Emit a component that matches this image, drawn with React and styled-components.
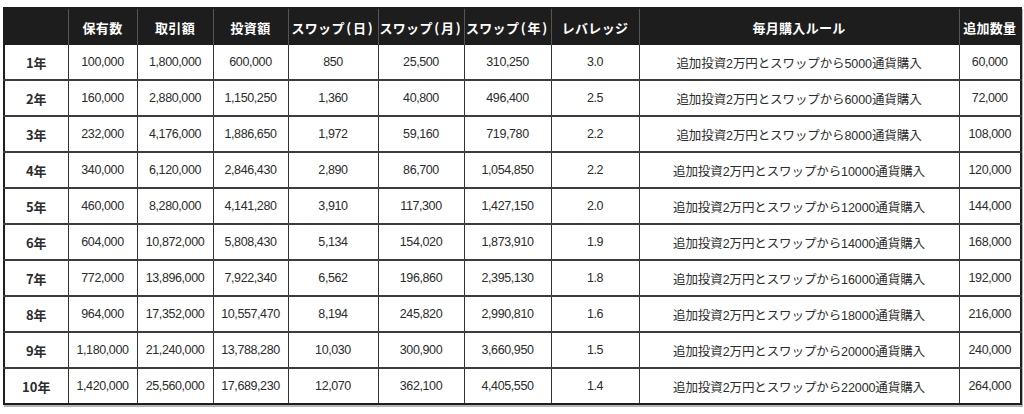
import React from 'react';
import styled, { createGlobalStyle } from 'styled-components';

const GlobalStyle = createGlobalStyle`
  body {
    margin: 0;
    background: #fff;
  }
`;

const Page = styled.div`
  width: 1024px;
  height: 414px;
  padding: 7px 0 0 3px;
  box-sizing: border-box;
  background: #fff;
`;

const Table = styled.table`
  width: 1017px;
  table-layout: fixed;
  border-collapse: collapse;
  border: 2px solid #1e1e1e;
  box-shadow: 1px 2px 0 #b5b5b5;
  font-family: "Liberation Sans", "Noto Sans CJK JP", sans-serif;
`;

const HeadCell = styled.th`
  height: 36px;
  padding: 0;
  background: #1d1d1d;
  color: #fff;
  font-family: "Noto Sans CJK JP", sans-serif;
  font-size: 13px;
  font-weight: 700;
  letter-spacing: 0.3px;
  text-align: center;
  white-space: nowrap;
  border-left: 1px solid #555;
  &:first-child {
    border-left: none;
  }
`;

const Paren = styled.span`
  margin: 0 1.5px;
`;

const Row = styled.tr`
  border-top: 2px solid #3c3c3c;
  &:first-child {
    border-top: none;
  }
`;

const Cell = styled.td`
  height: 34px;
  padding: 0;
  text-align: center;
  white-space: nowrap;
  color: #2c2c2c;
  font-size: ${p => (p.$label ? '13px' : '12.5px')};
  font-weight: ${p => (p.$label ? 700 : 400)};
  letter-spacing: ${p => (p.$label ? '0' : '-0.4px')};
  font-family: ${p => (p.$label ? '"Noto Sans CJK JP", sans-serif' : 'inherit')};
  border-left: 1px solid #333;
  &:first-child {
    border-left: none;
  }
`;

const RuleCell = styled(Cell)`
  letter-spacing: -0.1px;
  font-size: 12.5px;
`;

const columns = [
  ['', 64],
  ['保有数', 69],
  ['取引額', 76],
  ['投資額', 75],
  ['スワップ', 90, '日'],
  ['スワップ', 86, '月'],
  ['スワップ', 87, '年'],
  ['レバレッジ', 88],
  ['毎月購入ルール', 320],
  ['追加数量', 62],
];

const rows = [
  ['1年', '100,000', '1,800,000', '600,000', '850', '25,500', '310,250', '3.0', '5000', '60,000'],
  ['2年', '160,000', '2,880,000', '1,150,250', '1,360', '40,800', '496,400', '2.5', '6000', '72,000'],
  ['3年', '232,000', '4,176,000', '1,886,650', '1,972', '59,160', '719,780', '2.2', '8000', '108,000'],
  ['4年', '340,000', '6,120,000', '2,846,430', '2,890', '86,700', '1,054,850', '2.2', '10000', '120,000'],
  ['5年', '460,000', '8,280,000', '4,141,280', '3,910', '117,300', '1,427,150', '2.0', '12000', '144,000'],
  ['6年', '604,000', '10,872,000', '5,808,430', '5,134', '154,020', '1,873,910', '1.9', '14000', '168,000'],
  ['7年', '772,000', '13,896,000', '7,922,340', '6,562', '196,860', '2,395,130', '1.8', '16000', '192,000'],
  ['8年', '964,000', '17,352,000', '10,557,470', '8,194', '245,820', '2,990,810', '1.6', '18000', '216,000'],
  ['9年', '1,180,000', '21,240,000', '13,788,280', '10,030', '300,900', '3,660,950', '1.5', '20000', '240,000'],
  ['10年', '1,420,000', '25,560,000', '17,689,230', '12,070', '362,100', '4,405,550', '1.4', '22000', '264,000'],
];

const App = () => {
  return (
    <Page>
      <GlobalStyle />
      <Table>
        <colgroup>
          {columns.map(([name, w], i) => (
            <col key={i} style={{ width: w }} />
          ))}
        </colgroup>
        <thead>
          <tr>
            {columns.map(([name, w, unit], i) => (
              <HeadCell key={i}>
                {name}
                {unit && (
                  <>
                    <Paren>(</Paren>
                    {unit}
                    <Paren>)</Paren>
                  </>
                )}
              </HeadCell>
            ))}
          </tr>
        </thead>
        <tbody>
          {rows.map(r => (
            <Row key={r[0]}>
              <Cell $label>{r[0]}</Cell>
              {r.slice(1, 8).map((v, i) => (
                <Cell key={i}>{v}</Cell>
              ))}
              <RuleCell>追加投資2万円とスワップから{r[8]}通貨購入</RuleCell>
              <Cell>{r[9]}</Cell>
            </Row>
          ))}
        </tbody>
      </Table>
    </Page>
  );
};

export default App;
